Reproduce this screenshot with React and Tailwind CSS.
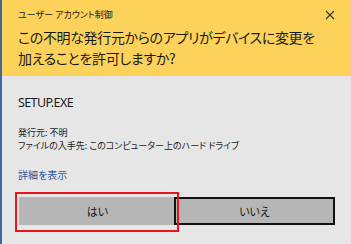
export default function App() {
  const jp = "[font-family:'Noto_Sans_CJK_JP',sans-serif] [font-feature-settings:'palt']";
  return (
    <div className={`relative w-[351px] h-[244px] overflow-hidden bg-[#e6e6e6] border-l-2 border-[#3d6a98] ${jp}`}>
      <div className="h-[76px] bg-[#fcd25b] pl-[16px] pr-[12px]">
        <div className="flex items-center justify-between h-[28px] pt-[1px]">
          <span className="text-[9px] leading-[12px] text-[#1a1a1a]">ユーザー アカウント制御</span>
          <svg width="10" height="10" viewBox="0 0 10 10" className="mr-[4px]">
            <path d="M1 1L9 9M9 1L1 9" stroke="#333" strokeWidth="1.1" />
          </svg>
        </div>
        <div className="text-[14px] leading-[21px] tracking-[-0.35px] text-[#1a1a1a] whitespace-nowrap -mt-[1px]">
          <div>この不明な発行元からのアプリがデバイスに変更を</div>
          <div>加えることを許可しますか?</div>
        </div>
      </div>
      <div className="pl-[16px] pr-[14px]">
        <div className="mt-[19px] text-[12.5px] leading-[16px] tracking-[-0.6px] text-[#1a1a1a] [font-family:'Noto_Sans',sans-serif]">SETUP.EXE</div>
        <div className="mt-[15px] text-[9px] leading-[13px] text-[#1a1a1a] whitespace-nowrap">
          <div>発行元: 不明</div>
          <div>ファイルの入手先: このコンピューター上のハード ドライブ</div>
        </div>
        <div className="mt-[16px] text-[10px] leading-[13px] text-[#24559a]">詳細を表示</div>
        <div className="mt-[16px] flex pl-[1px]">
          <div className="w-[157px] h-[28px] bg-[#b6b6b6] flex items-center justify-center text-[11px] text-[#1a1a1a]">はい</div>
          <div className="-ml-[2px] w-[161px] h-[28px] bg-[#b6b6b6] border-2 border-[#111] flex items-center justify-center text-[11px] text-[#1a1a1a]">いいえ</div>
        </div>
      </div>
      <div className="absolute left-[13px] top-[192px] w-[164px] h-[40px] border-2 border-[#e8141b]" />
    </div>
  );
}
